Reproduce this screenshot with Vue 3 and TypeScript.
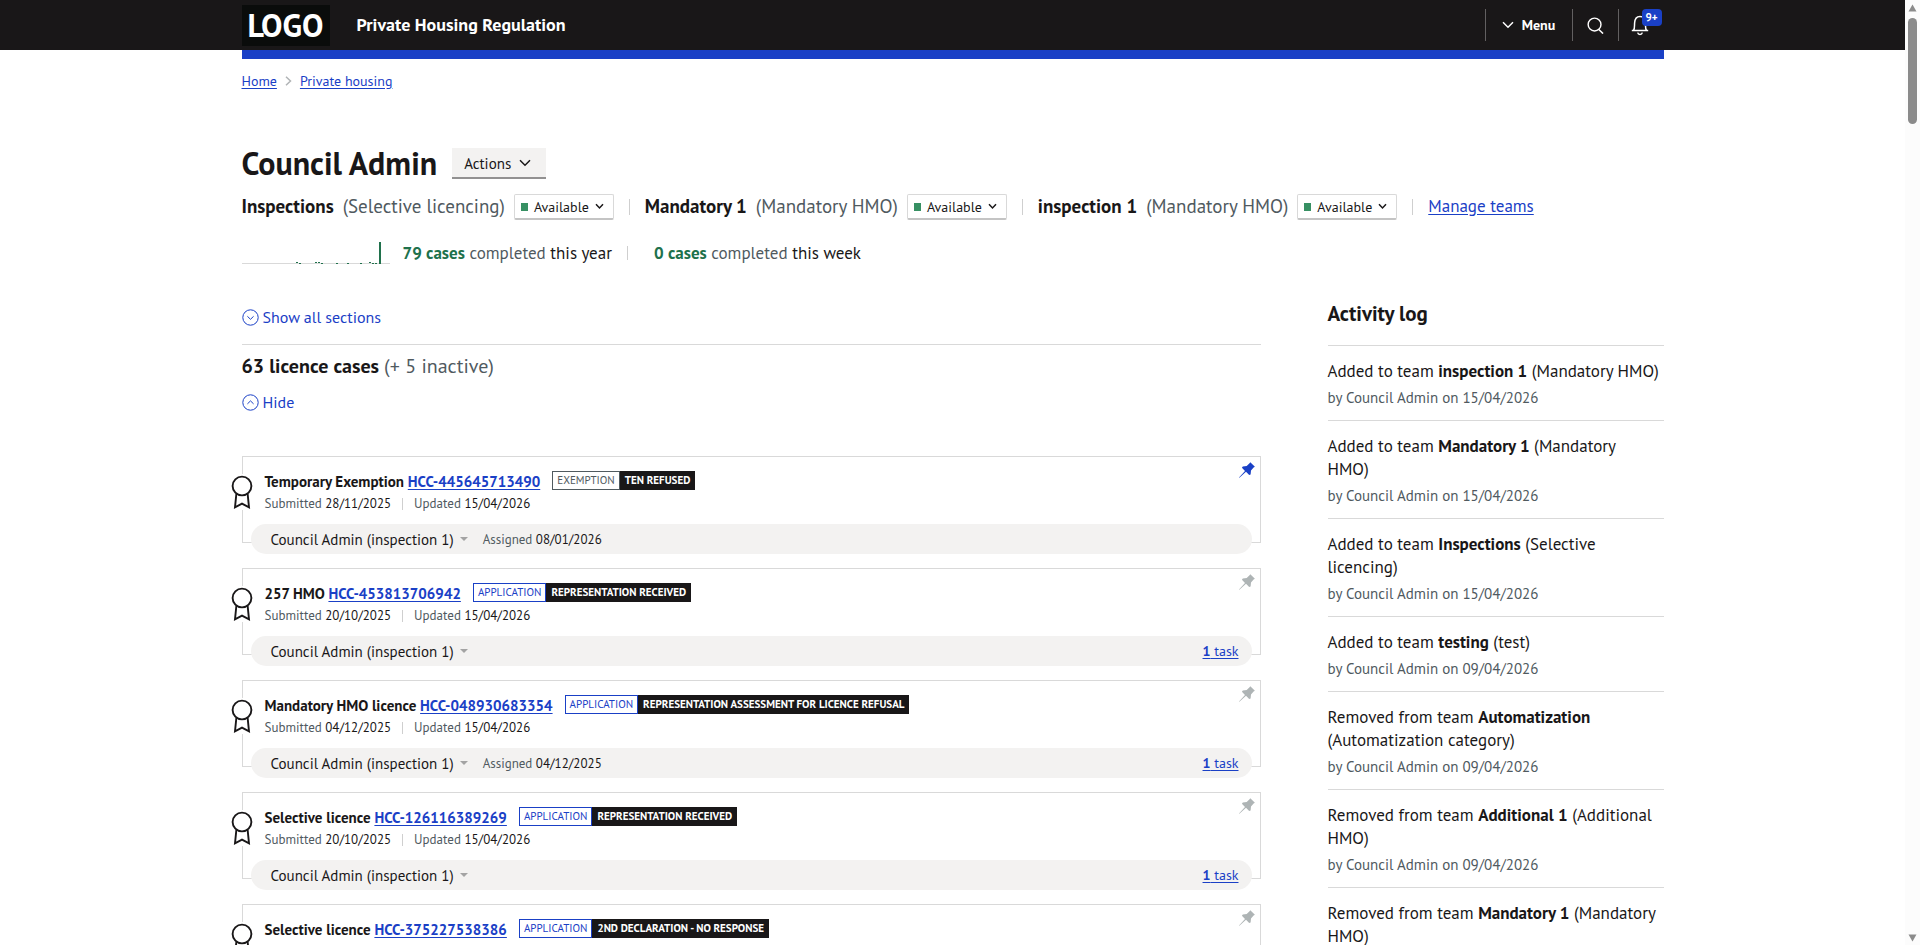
<script setup lang="ts">
interface Team { name: string; category: string }
interface LicenceCase {
  kind: string
  reference: string
  stage: string
  exempt?: boolean
  status: string
  submitted?: string
  updated?: string
  assignee?: string
  assigned?: string
  tasks?: number
  pinned?: boolean
}
interface Activity { action: string; team: string; category: string; by?: string }

const teams: Team[] = [
  { name: 'Inspections', category: 'Selective licencing' },
  { name: 'Mandatory 1', category: 'Mandatory HMO' },
  { name: 'inspection 1', category: 'Mandatory HMO' },
]

const me = 'Council Admin (inspection 1)'
const cases: LicenceCase[] = [
  { kind: 'Temporary Exemption', reference: 'HCC-445645713490', stage: 'Exemption', exempt: true, status: 'TEN refused', submitted: '28/11/2025', updated: '15/04/2026', assignee: me, assigned: '08/01/2026', pinned: true },
  { kind: '257 HMO', reference: 'HCC-453813706942', stage: 'Application', status: 'Representation received', submitted: '20/10/2025', updated: '15/04/2026', assignee: me, tasks: 1 },
  { kind: 'Mandatory HMO licence', reference: 'HCC-048930683354', stage: 'Application', status: 'Representation assessment for licence refusal', submitted: '04/12/2025', updated: '15/04/2026', assignee: me, assigned: '04/12/2025', tasks: 1 },
  { kind: 'Selective licence', reference: 'HCC-126116389269', stage: 'Application', status: 'Representation received', submitted: '20/10/2025', updated: '15/04/2026', assignee: me, tasks: 1 },
  { kind: 'Selective licence', reference: 'HCC-375227538386', stage: 'Application', status: '2nd declaration - no response' },
]

const activities: Activity[] = [
  { action: 'Added to team', team: 'inspection 1', category: 'Mandatory HMO', by: 'by Council Admin on 15/04/2026' },
  { action: 'Added to team', team: 'Mandatory 1', category: 'Mandatory HMO', by: 'by Council Admin on 15/04/2026' },
  { action: 'Added to team', team: 'Inspections', category: 'Selective licencing', by: 'by Council Admin on 15/04/2026' },
  { action: 'Added to team', team: 'testing', category: 'test', by: 'by Council Admin on 09/04/2026' },
  { action: 'Removed from team', team: 'Automatization', category: 'Automatization category', by: 'by Council Admin on 09/04/2026' },
  { action: 'Removed from team', team: 'Additional 1', category: 'Additional HMO', by: 'by Council Admin on 09/04/2026' },
  { action: 'Removed from team', team: 'Mandatory 1', category: 'Mandatory HMO' },
]

// Completed cases per week: [x, height]
const bars: [number, number][] = [
  [54, 2], [57, 1], [73, 2], [76, 2], [79, 1], [94, 1], [105, 1], [118, 1], [127, 2], [130, 1], [133, 1], [137, 22],
]
</script>

<template>
  <div class="screen">
    <div class="page">
      <header class="masthead">
        <div class="container masthead-row">
          <a class="logo" href="#">LOGO</a>
          <a class="service" href="#">Private Housing Regulation</a>
          <nav class="tools" aria-label="Main">
            <button class="tool menu" type="button">
              <svg width="12" height="8" viewBox="0 0 12 8" aria-hidden="true"><path d="M1 1.2 6 6.2 11 1.2" /></svg>
              Menu
            </button>
            <button class="tool" type="button" aria-label="Search">
              <svg width="17" height="17" viewBox="0 0 18 18" aria-hidden="true"><circle cx="8" cy="8" r="6.8" /><path d="M12.2 13 17 17.6" /></svg>
            </button>
            <button class="tool bell" type="button" aria-label="Notifications">
              <svg width="18" height="21" viewBox="0 0 18 21" aria-hidden="true"><path d="M.8 15.5h16.400M2.600 15.300C3.800 13.600 3.400 10.600 3.600 8 3.800 4 6 1.400 9 1.400s5.200 2.600 5.400 6.600c.2 2.600-.2 5.600 1 7.300M6.700 17.600C7 19 8 19.400 9 19.400s2-.4 2.300-1.800" /></svg>
              <span class="count">9+</span>
            </button>
          </nav>
        </div>
      </header>

      <div class="container">
        <div class="stripe"></div>
        <nav class="crumbs" aria-label="Breadcrumb">
          <a href="#">Home</a>
          <svg width="7" height="10" viewBox="0 0 7 10" aria-hidden="true"><path d="M1 .8 5.500 5 1 9.200" /></svg>
          <a href="#">Private housing</a>
        </nav>

        <div class="heading">
          <h1>Council Admin</h1>
          <button class="actions" type="button" aria-haspopup="menu">
            Actions
            <svg width="12" height="8" viewBox="0 0 12 8" aria-hidden="true"><path d="M1 1.200 6 6.200 11 1.200" /></svg>
          </button>
        </div>

        <div class="teams">
          <div v-for="team in teams" :key="team.name" class="team">
            <strong>{{ team.name }}</strong>
            <span class="muted">({{ team.category }})</span>
            <button class="availability" type="button" aria-haspopup="menu">
              <span class="dot"></span>Available
              <svg width="9" height="7" viewBox="0 0 9 7" aria-hidden="true"><path d="M1 1.200 4.500 4.900 8 1.200" /></svg>
            </button>
          </div>
          <a class="manage" href="#">Manage teams</a>
        </div>

        <div class="stats">
          <svg class="spark" width="148" height="22" viewBox="0 0 148 22" role="img" aria-label="Completed cases">
            <rect class="axis" x="0" y="21" width="148" height="1" />
            <rect v-for="[x, h] in bars" :key="x" :x="x" :y="22 - h" width="2" :height="h === 2 ? 1 : h" />
          </svg>
          <span class="stat"><b>79 cases</b> <span class="muted">completed</span> this year</span>
          <span class="divider"></span>
          <span class="stat"><b>0 cases</b> <span class="muted">completed</span> this week</span>
        </div>

        <div class="columns">
          <main>
            <button class="toggle show-all" type="button">
              <svg width="17" height="17" viewBox="0 0 17 17" aria-hidden="true"><circle cx="8.500" cy="8.500" r="7.700" /><path d="M5.400 7.300 8.500 10.300 11.600 7.300" /></svg>
              Show all sections
            </button>
            <section class="cases">
              <h2>63 licence cases <span class="muted">(+ 5 inactive)</span></h2>
              <button class="toggle" type="button">
                <svg width="17" height="17" viewBox="0 0 17 17" aria-hidden="true"><circle cx="8.500" cy="8.500" r="7.700" /><path d="M5.400 9.900 8.500 6.900 11.600 9.900" /></svg>
                Hide
              </button>
              <div class="cards">
                <article v-for="item in cases" :key="item.reference" class="card">
                  <span class="rosette">
                    <svg width="22" height="36" viewBox="0 0 22 36" aria-hidden="true"><path d="M5.400 19.500 4 33.400 11 29.600 18 33.400 16.600 19.500" /><circle cx="11" cy="12" r="9.400" /></svg>
                  </span>
                  <button class="pin" :class="{ active: item.pinned }" type="button" :aria-label="item.pinned ? 'Unpin' : 'Pin'">
                    <svg width="16" height="16" viewBox="0 0 16 16" aria-hidden="true"><path d="M11.300.2 15.900 4.800 14.600 5.600 12 8.400l-.4 4-1.400.6-3.200-3.200L.4 15.800 0 15.400 6 8.900 2.900 5.800 3.800 4.600 7.700 4.100 10.300 1.500Z" /></svg>
                  </button>
                  <div class="title">
                    <h3>{{ item.kind }} <a href="#">{{ item.reference }}</a></h3>
                    <span class="tags"><span class="stage" :class="{ exempt: item.exempt }">{{ item.stage }}</span><span class="status">{{ item.status }}</span></span>
                  </div>
                  <div v-if="item.submitted" class="dates">
                    <span><span class="muted">Submitted</span> {{ item.submitted }}</span>
                    <span class="rule"></span>
                    <span><span class="muted">Updated</span> {{ item.updated }}</span>
                  </div>
                  <div v-if="item.assignee" class="strip">
                    <button class="assignee" type="button" aria-haspopup="menu">
                      {{ item.assignee }}
                      <svg width="8" height="4" viewBox="0 0 8 4" aria-hidden="true"><path d="M0 0h8L4 4Z" /></svg>
                    </button>
                    <span v-if="item.assigned" class="assigned"><span class="muted">Assigned</span> {{ item.assigned }}</span>
                    <a v-if="item.tasks" class="tasks" href="#"><b>{{ item.tasks }}</b> task</a>
                  </div>
                </article>
              </div>
            </section>
          </main>

          <aside>
            <h2>Activity log</h2>
            <ul>
              <li v-for="(entry, i) in activities" :key="i">
                <p>{{ entry.action }} <b>{{ entry.team }}</b> ({{ entry.category }})</p>
                <p v-if="entry.by" class="by muted">{{ entry.by }}</p>
              </li>
            </ul>
          </aside>
        </div>
      </div>
    </div>

    <div class="scrollbar" aria-hidden="true">
      <svg width="9" height="8" viewBox="0 0 9 8"><path d="M4.500.5 8.500 7.500H.5Z" /></svg>
      <div class="track"><div class="thumb"></div></div>
      <svg width="9" height="8" viewBox="0 0 9 8"><path d="M4.500 7.500.5.5h8Z" /></svg>
    </div>
  </div>
</template>

<style>
body {
  margin: 0;
  background: #fff;
}
</style>

<style scoped>
.screen {
  display: grid;
  grid-template-columns: minmax(0, 1fr) 15px;
  height: 100vh;
  overflow: hidden;
  color: #191718;
  font-family: "PT Sans", Lato, "Noto Sans", sans-serif;
}
.page {
  min-width: 0;
  min-height: 0;
  overflow: hidden;
}
.container {
  max-width: 1422px;
  margin: 0 auto;
}
h1, h2, h3, p, ul {
  margin: 0;
  padding: 0;
}
button {
  margin: 0;
  padding: 0;
  border: 0;
  background: none;
  color: inherit;
  font: inherit;
  cursor: pointer;
}
svg {
  display: block;
  flex: none;
  fill: none;
  stroke: currentColor;
}
a {
  color: #1a40c6;
  text-underline-offset: 2px;
}
.muted {
  color: #505a5f;
  font-weight: 400;
}

.masthead {
  background: #191718;
  color: #fff;
}
.masthead-row {
  display: flex;
  align-items: center;
  height: 50px;
}
.logo {
  box-sizing: border-box;
  width: 88px;
  background: #0a0c0b;
  color: #fff;
  font-size: 32px;
  font-weight: 700;
  line-height: 41px;
  text-align: center;
  text-decoration: none;
}
.service {
  margin-left: 27px;
  color: #fff;
  font-size: 18px;
  font-weight: 700;
  line-height: 24px;
  text-decoration: none;
}
.tools {
  display: flex;
  margin-left: auto;
}
.tool {
  display: flex;
  align-items: center;
  justify-content: center;
  box-sizing: border-box;
  width: 46px;
  height: 32px;
  border-left: 1px solid #626061;
  stroke-width: 1.5;
}
.menu {
  gap: 8px;
  width: 87px;
  font-size: 14px;
  font-weight: 700;
}
.bell {
  position: relative;
  justify-content: flex-start;
  padding-left: 12px;
}
.count {
  position: absolute;
  top: 0;
  right: 2px;
  width: 20px;
  border-radius: 4px;
  background: #1a40c6;
  font-size: 11px;
  font-weight: 700;
  line-height: 17px;
  text-align: center;
}

.stripe {
  height: 9px;
  background: #1a40c6;
}
.crumbs {
  display: flex;
  align-items: center;
  gap: 8px;
  margin-top: 12px;
  font-size: 14px;
  line-height: 20px;
}
.crumbs svg {
  color: #b1b4b6;
  stroke-width: 1.5;
}

.heading {
  display: flex;
  align-items: center;
  gap: 15px;
  margin-top: 56px;
}
h1 {
  font-size: 32px;
  line-height: 32px;
}
.actions {
  display: flex;
  align-items: center;
  gap: 8px;
  height: 31px;
  padding: 0 15px 0 12px;
  background: #f3f2f1;
  box-shadow: inset 0 -2px #929191;
  font-size: 15px;
  stroke-width: 1.5;
}

.teams {
  display: flex;
  flex-wrap: wrap;
  margin-top: 15px;
  font-size: 19px;
  line-height: 24px;
}
.team {
  display: flex;
  gap: 9px;
}
.team::after {
  width: 1px;
  height: 16px;
  margin: 5px 15px 0 6px;
  background: #cfcfcf;
  content: "";
}
.availability {
  display: flex;
  align-items: center;
  height: 26px;
  padding: 0 9px 0 6px;
  border: 1px solid #d9d9d9;
  border-bottom: 2px solid #c4c4c4;
  border-radius: 2px;
  box-sizing: border-box;
  font-size: 14px;
  stroke-width: 1.5;
}
.dot {
  width: 7px;
  height: 8px;
  margin-right: 6px;
  background: #379063;
}
.availability svg {
  margin-left: 6px;
}
.manage {
  font-size: 17px;
}

.stats {
  display: flex;
  align-items: center;
  margin-top: 22px;
  font-size: 17px;
  line-height: 22px;
}
.spark {
  margin-right: 13px;
  fill: #20714c;
  stroke: none;
}
.axis {
  fill: #d9d9d9;
}
.stat b {
  color: #20714c;
}
.divider {
  width: 1px;
  height: 14px;
  margin: 0 26px 0 15px;
  background: #cfcfcf;
}

.columns {
  display: grid;
  grid-template-columns: minmax(0, 1fr) 336px;
  gap: 67px;
  margin-top: 36px;
}
.toggle {
  display: flex;
  align-items: center;
  gap: 4px;
  color: #1a40c6;
  font-size: 16px;
  line-height: 22px;
}
.show-all {
  margin: 6px 0 16px;
}
.cases {
  border-top: 1px solid #d9d9d9;
}
.cases h2 {
  margin: 9px 0 13px;
  font-size: 20px;
  line-height: 24px;
}
.cards {
  display: grid;
  gap: 25px;
  margin-top: 43px;
}
.card {
  position: relative;
  box-sizing: border-box;
  min-height: 87px;
  padding-top: 14px;
  border: 1px solid #d9d9d9;
}
.rosette {
  position: absolute;
  top: 17px;
  left: -12px;
  background: #fff;
  stroke-width: 1.9;
}
.rosette circle {
  fill: #fff;
}
.pin {
  position: absolute;
  top: 5px;
  right: 5px;
  color: #aeb4b5;
}
.pin.active {
  color: #1a40c6;
}
.pin svg {
  fill: currentColor;
  stroke: none;
}
.title {
  display: flex;
  gap: 12px;
  padding-left: 22px;
}
h3 {
  font-size: 15px;
  line-height: 22px;
}
.tags {
  display: flex;
  height: 19px;
  font-size: 11px;
  line-height: 17px;
  text-transform: uppercase;
}
.stage,
.status {
  padding: 0 4px;
  border: 1px solid #1a40c6;
  color: #1a40c6;
}
.stage.exempt {
  border-color: #505a5f;
  color: #505a5f;
}
.status {
  border-color: #191718;
  background: #191718;
  color: #fff;
  font-weight: 700;
}
.dates {
  display: flex;
  align-items: center;
  gap: 11px;
  margin-top: 1px;
  padding-left: 22px;
  font-size: 13px;
  line-height: 20px;
}
.rule {
  width: 1px;
  height: 12px;
  background: #cfcfcf;
}
.strip {
  position: relative;
  display: flex;
  align-items: center;
  height: 30px;
  margin: 10px 8px -12px;
  padding: 0 13px 0 20px;
  border-radius: 15px;
  box-sizing: border-box;
  background: #f3f2f1;
}
.assignee {
  display: flex;
  align-items: center;
  gap: 6px;
  font-size: 15px;
}
.assignee svg {
  fill: #a3a3a3;
  stroke: none;
}
.assigned {
  margin-left: 15px;
  font-size: 13px;
}
.tasks {
  margin-left: auto;
  font-size: 14px;
}

aside h2 {
  margin-bottom: 17px;
  font-size: 21px;
  line-height: 28px;
}
aside ul {
  list-style: none;
}
aside li {
  padding: 14px 0 12px;
  border-top: 1px solid #d9d9d9;
  font-size: 17px;
  line-height: 23px;
}
aside p {
  padding-right: 4px;
}
.by {
  margin-top: 5px;
  font-size: 15px;
  line-height: 20px;
}

.scrollbar {
  display: flex;
  flex-direction: column;
  align-items: center;
  box-sizing: border-box;
  padding: 4px 0 3px;
  background: #fcfcfc;
}
.scrollbar svg {
  fill: #8b8b8b;
  stroke: none;
}
.track {
  flex: 1;
  width: 9px;
  padding-top: 6px;
}
.thumb {
  height: 106px;
  border-radius: 5px;
  background: #8b8b8b;
}
</style>
